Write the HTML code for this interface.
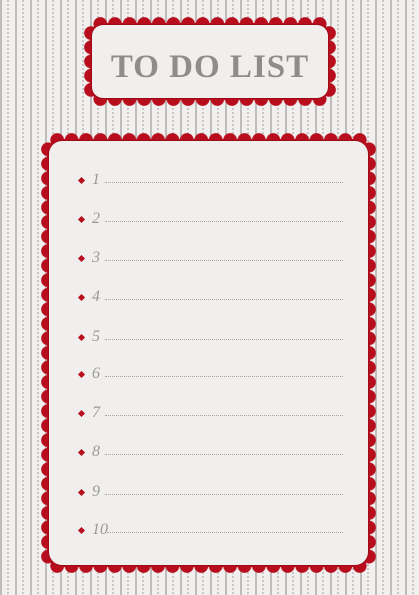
<!DOCTYPE html>
<html><head><style>
html,body{margin:0;padding:0}
body{width:419px;height:595px;position:relative;overflow:hidden;
background-color:#f1f0ee;
background-image:
 linear-gradient(90deg,#bfbdbb 0 2px,transparent 2px 15px),
 repeating-linear-gradient(180deg,#c9c7c5 0 2px,transparent 2px 4px);
background-size:15px 100%,15px 100%;
}
.bgfix{position:absolute;inset:0;background-image:linear-gradient(90deg,transparent 0 2px,#f1f0ee 2px 7px,transparent 7px 9px,#f1f0ee 9px 15px);background-size:15px 100%}
.sc{position:absolute}
.sc .o{position:absolute;inset:6px;border-radius:14px;background:#b70d1c}
.sc .t,.sc .b{position:absolute;left:9px;right:9px;height:14px;background-image:radial-gradient(circle at 50% 50%,#b70d1c 6.5px,transparent 7.2px);background-size:14.5px 14px;background-repeat:round no-repeat}
.sc .l,.sc .r{position:absolute;top:9px;bottom:9px;width:14px;background-image:radial-gradient(circle at 50% 50%,#b70d1c 6.5px,transparent 7.2px);background-size:14px 14.5px;background-repeat:no-repeat round}
.sc .t{top:0}.sc .b{bottom:0}.sc .l{left:0}.sc .r{right:0}
.sc .in{position:absolute;inset:8px;background:#f0efed;border-radius:11px;box-shadow:0 0 0 1px #9e0a16}
.title{font-family:"Liberation Serif",serif;font-weight:bold;color:#8f8c89;font-size:33px;position:absolute;left:0;right:0;top:24px;text-align:center;letter-spacing:1px}
.row{position:absolute;left:76px;width:270px;height:20px;font-family:"Liberation Serif",serif;font-style:italic;color:#999;font-size:16px}
.row .d{position:absolute;left:3px;top:4px;width:5px;height:5px;background:#b70d1c;transform:rotate(45deg)}
.row .n{position:absolute;left:16px;top:-3px}
.row .ln{position:absolute;left:29px;right:3px;top:8px;border-top:1px dotted #a9a7a5}
</style></head><body>
<div class="bgfix"></div>
<div class="sc" style="left:84px;top:17px;width:252px;height:89px">
 <div class="o"></div><div class="t"></div><div class="b"></div><div class="l"></div><div class="r"></div>
 <div class="in"><div class="title">TO DO LIST</div></div>
</div>
<div class="sc" style="left:41px;top:133px;width:335px;height:440px">
 <div class="o"></div><div class="t"></div><div class="b"></div><div class="l"></div><div class="r"></div>
 <div class="in" style="border-radius:13px"></div>
</div>
<div class="row" style="top:174px"><div class="d"></div><span class="n">1</span><div class="ln"></div></div>
<div class="row" style="top:213px"><div class="d"></div><span class="n">2</span><div class="ln"></div></div>
<div class="row" style="top:252px"><div class="d"></div><span class="n">3</span><div class="ln"></div></div>
<div class="row" style="top:291px"><div class="d"></div><span class="n">4</span><div class="ln"></div></div>
<div class="row" style="top:331px"><div class="d"></div><span class="n">5</span><div class="ln"></div></div>
<div class="row" style="top:368px"><div class="d"></div><span class="n">6</span><div class="ln"></div></div>
<div class="row" style="top:407px"><div class="d"></div><span class="n">7</span><div class="ln"></div></div>
<div class="row" style="top:446px"><div class="d"></div><span class="n">8</span><div class="ln"></div></div>
<div class="row" style="top:486px"><div class="d"></div><span class="n">9</span><div class="ln"></div></div>
<div class="row" style="top:524px"><div class="d"></div><span class="n">10</span><div class="ln" style="left:31px"></div></div>
</body></html>
